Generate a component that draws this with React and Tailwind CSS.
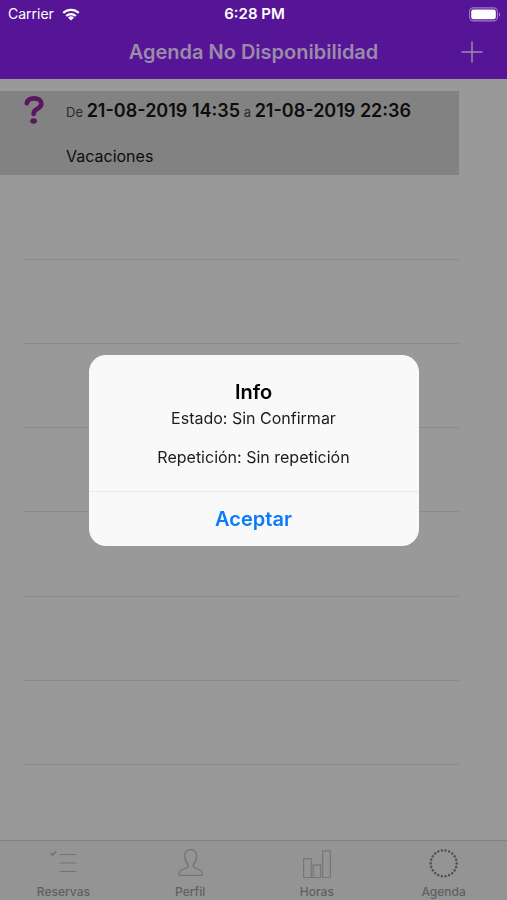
import React from "react";

const emptyRows = [1, 2, 3, 4, 5, 6, 7];

function WifiIcon() {
  return (
    <svg className="h-[13px] w-[18px]" viewBox="0 0 18 13" aria-hidden="true">
      <g fill="none" stroke="#fff" strokeWidth="2.2">
        <path d="M1.2 4.9a11.3 11.3 0 0 1 15.6 0" />
        <path d="M4.2 8a7 7 0 0 1 9.6 0" />
      </g>
      <path d="M9 12.6 5.9 9.6a4.5 4.5 0 0 1 6.2 0z" fill="#fff" />
    </svg>
  );
}

function BatteryIcon() {
  return (
    <svg className="h-[15px] w-8" viewBox="0 0 32 15" aria-hidden="true">
      <rect x="0.6" y="0.9" width="27.8" height="13" rx="3.8" fill="none" stroke="#a07cc6" strokeWidth="1.1" />
      <rect x="2.2" y="2.5" width="24.6" height="9.8" rx="2.2" fill="#fff" />
      <path d="M30 5.4c1.6.6 1.6 3.6 0 4.2z" fill="#a07cc6" />
    </svg>
  );
}

function QuestionIcon() {
  return (
    <svg className="h-7 w-5" viewBox="0 0 20 28" aria-hidden="true">
      <path
        d="M2.800 7.200C3.500 3.600 6.200 2.400 10 2.400c4.600 0 7.400 2 7.400 5.200 0 3.200-2.500 4.500-4.700 5.700-2.200 1.200-3.100 2.100-3.100 4.700"
        fill="none"
        stroke="#5a1660"
        strokeWidth="4.600"
        strokeLinecap="round"
      />
      <ellipse cx="9.600" cy="25" rx="3.400" ry="2.800" fill="#5a1660" />
    </svg>
  );
}

function ReservasIcon() {
  return (
    <svg className="h-8 w-8" viewBox="0 0 32 32" fill="none" stroke="#737373" aria-hidden="true">
      <path d="m3.600 7.300 1.700 2 4-4.300" strokeWidth="1.600" />
      <path d="M12.500 8.500h17M12.500 17h17M12.500 25.500h17" strokeWidth="1.200" />
    </svg>
  );
}

function PerfilIcon() {
  return (
    <svg className="h-8 w-8" viewBox="0 0 32 32" fill="none" stroke="#737373" strokeWidth="1.200" strokeLinejoin="round" aria-hidden="true">
      <path d="M4.900 29.300h23.500c0-3.300-.8-4.600-3.200-5.600l-4.600-1.900c-1.200-.5-1.600-1.300-1.300-2.500l.4-1.300c2.100-2.200 2.900-4.600 2.900-8.100 0-4-2.300-6.200-5.900-6.200s-6 2.200-6 6.200c0 3.500.9 5.900 3 8.100l.4 1.300c.3 1.200-.1 2-1.300 2.500l-4.600 1.900c-2.400 1-3.300 2.300-3.300 5.600z" />
    </svg>
  );
}

function HorasIcon() {
  return (
    <svg className="h-8 w-8" viewBox="0 0 32 32" fill="none" stroke="#767676" strokeWidth="1.200" aria-hidden="true">
      <rect x="2.600" y="12.600" width="7.600" height="19" />
      <rect x="12.100" y="19" width="7.600" height="12.600" />
      <rect x="21.700" y="4.800" width="7.700" height="26.800" />
    </svg>
  );
}

function AgendaIcon() {
  return (
    <svg className="h-8 w-8" viewBox="0 0 32 32" aria-hidden="true">
      <circle
        cx="15.700"
        cy="17.300"
        r="13"
        fill="none"
        stroke="#505050"
        strokeWidth="2.500"
        strokeLinecap="round"
        pathLength="88"
        strokeDasharray="0.100 3.900"
      />
    </svg>
  );
}

const tabs = [
  { label: "Reservas", Icon: ReservasIcon },
  { label: "Perfil", Icon: PerfilIcon },
  { label: "Horas", Icon: HorasIcon },
  { label: "Agenda", Icon: AgendaIcon },
];

export default function App() {
  return (
    <div className="flex min-h-screen flex-col bg-[#999999] font-['Inter','Liberation_Sans',sans-serif] text-[#0d0d0d]">
      <header className="bg-[#561596]">
        <div className="grid h-7 grid-cols-[1fr_auto_1fr] items-center pr-1.5 pl-2 text-sm text-white">
          <div className="flex items-center gap-2">
            <span>Carrier</span>
            <WifiIcon />
          </div>
          <time className="text-[15px] font-semibold">6:28 PM</time>
          <div className="flex justify-end">
            <BatteryIcon />
          </div>
        </div>
        <div className="grid h-[51px] grid-cols-[48px_1fr_48px] items-center px-[11px] pb-[3px]">
          <h1 className="col-start-2 text-center text-xl font-semibold text-[#9a8ba8]">
            Agenda No Disponibilidad
          </h1>
          <button type="button" aria-label="Añadir" className="flex h-10 items-center justify-center">
            <svg className="h-[22px] w-[22px]" viewBox="0 0 22 22" stroke="#9a8ba8" strokeWidth="1.500" aria-hidden="true">
              <path d="M11 .5v21M.5 11h21" />
            </svg>
          </button>
        </div>
      </header>

      <main className="flex flex-1 flex-col pt-3 pr-12 pb-[75px]">
        <ul className="grid flex-1 auto-rows-fr">
          <li className="flex bg-[#828282] pl-6">
            <div className="w-[42px] pt-[5px]">
              <QuestionIcon />
            </div>
            <div className="flex flex-col gap-5 pt-2">
              <p className="text-[13px] leading-6 text-[#2a2a2a]">
                De <strong className="text-lg leading-6 font-semibold text-[#0d0d0d]">21-08-2019 14:35</strong> a{" "}
                <strong className="text-lg leading-6 font-semibold text-[#0d0d0d]">21-08-2019 22:36</strong>
              </p>
              <p className="text-[16px] leading-6">Vacaciones</p>
            </div>
          </li>
          {emptyRows.map((row) => (
            <li key={row} className="ml-6 border-b border-[#8b8b8b]" />
          ))}
        </ul>
      </main>

      <nav className="grid h-[60px] grid-cols-4 border-t border-[#828282] bg-[#949494]">
        {tabs.map(({ label, Icon }) => (
          <a key={label} href="#" className="flex flex-col items-center gap-[6px] pt-[5px] text-xs leading-4 font-medium text-[#606060]">
            <Icon />
            <span>{label}</span>
          </a>
        ))}
      </nav>

      <div className="fixed inset-0 flex items-center justify-center">
        <section
          role="alertdialog"
          aria-labelledby="alert-title"
          aria-describedby="alert-message"
          className="w-[330px] overflow-hidden rounded-[17px] bg-[#f9f9f9] text-center"
        >
          <div className="px-5 pt-6 pb-6">
            <h2 id="alert-title" className="text-xl leading-[26px] font-semibold text-black">
              Info
            </h2>
            <div id="alert-message" className="flex flex-col gap-[19px] pt-[3px] text-[16px] leading-5 text-[#1c1c1c]">
              <p>Estado: Sin Confirmar</p>
              <p>Repetición: Sin repetición</p>
            </div>
          </div>
          <button type="button" className="h-[55px] w-full border-t border-[#ececec] text-xl font-semibold text-[#0a7aff]">
            Aceptar
          </button>
        </section>
      </div>
    </div>
  );
}
